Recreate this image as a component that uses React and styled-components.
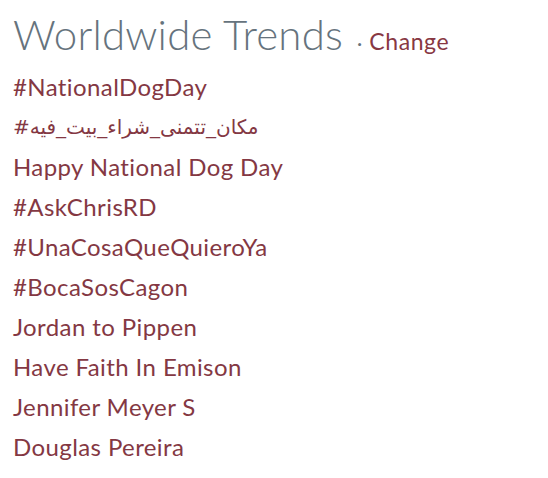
import styled, { createGlobalStyle } from 'styled-components'

const GlobalStyle = createGlobalStyle`
  body {
    margin: 0;
    background: #ffffff;
    font-family: Lato, "Noto Sans", sans-serif;
  }
`

const Wrapper = styled.div`
  width: 548px;
  height: 478px;
  padding: 8px 0 0 13px;
  box-sizing: border-box;
  display: flex;
  flex-direction: column;
`

const Header = styled.div`
  display: flex;
  align-items: baseline;
  gap: 8px;
  height: 59px;
`

const Title = styled.h1`
  margin: 0;
  font-size: 42px;
  font-weight: 300;
  letter-spacing: 0.2px;
  color: #66737d;
  line-height: 52px;
`

const Dot = styled.span`
  font-size: 20px;
  color: #66737d;
  margin-left: 6px;
`

const ChangeLink = styled.a`
  font-size: 23px;
  letter-spacing: 0.6px;
  color: #883843;
  text-decoration: none;
  margin-left: -1px;
`

const TrendList = styled.ul`
  list-style: none;
  margin: 0;
  padding: 0;
  display: flex;
  flex-direction: column;
`

const Trend = styled.li`
  font-size: ${p => (p.$rtl ? '20px' : '24px')};
  letter-spacing: ${p => (p.$rtl ? '0' : '0.4px')};
  line-height: 40px;
  color: #843843;
  font-family: ${p => (p.$rtl ? '"DejaVu Sans", Lato, sans-serif' : 'Lato, "Noto Sans", sans-serif')};
`

const trends = [
  '#NationalDogDay',
  '#مكان_تتمنى_شراء_بيت_فيه',
  'Happy National Dog Day',
  '#AskChrisRD',
  '#UnaCosaQueQuieroYa',
  '#BocaSosCagon',
  'Jordan to Pippen',
  'Have Faith In Emison',
  'Jennifer Meyer S',
  'Douglas Pereira',
]

const App = () => {
  return (
    <>
      <GlobalStyle />
      <Wrapper>
        <Header>
          <Title>Worldwide Trends</Title>
          <Dot>·</Dot>
          <ChangeLink href="#">Change</ChangeLink>
        </Header>
        <TrendList>
          {trends.map(t => (
            <Trend key={t} $rtl={t.startsWith('#م')} dir="ltr">
              {t}
            </Trend>
          ))}
        </TrendList>
      </Wrapper>
    </>
  )
}

export default App
